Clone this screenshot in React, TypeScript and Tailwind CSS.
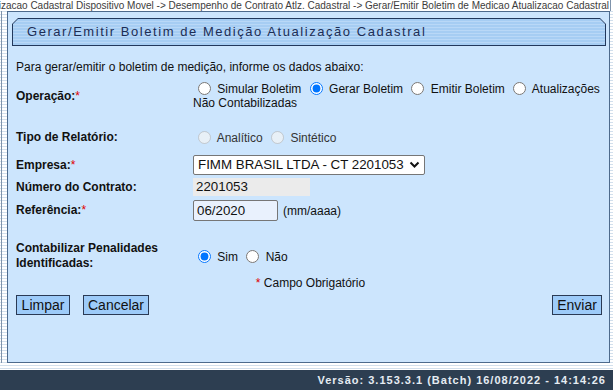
import React from "react";

const stripes =
  "bg-[repeating-linear-gradient(to_bottom,#ffffff_0px,#ffffff_2px,#d2dfec_2px,#d2dfec_3px)]";

function Radio({
  label,
  checked,
  disabled,
  name,
}: {
  label: string;
  checked?: boolean;
  disabled?: boolean;
  name: string;
}) {
  return (
    <label className={disabled ? "text-[#333]" : "text-[#111]"}>
      <input
        type="radio"
        name={name}
        defaultChecked={checked}
        disabled={disabled}
        className="m-0 ml-[5px] mr-[3px] h-[13px] w-[13px] align-[-2px]"
      />{" "}
      {label}
    </label>
  );
}

function Label({ text, required }: { text: string; required?: boolean }) {
  return (
    <div className="font-bold text-[12px] leading-[15px] text-[#111]">
      {text}
      {required && <span className="font-normal text-[#e00000]">*</span>}
    </div>
  );
}

function App() {
  return (
    <div
      className={`flex h-[390px] w-[613px] flex-col overflow-hidden font-['Liberation_Sans',Arial,sans-serif] ${stripes}`}
    >
      <div className="flex h-[11px] justify-end overflow-hidden whitespace-nowrap bg-white pr-[2px] text-[10px] leading-[11px] text-[#3c3c3c]">
        <span className="border-r border-[#7f93ab] pr-[1px]">
          Gsan -&gt; Cadastro -&gt; Atualizacao Cadastral -&gt; Atualizacao Cadastral Dispositivo Movel -&gt; Desempenho de Contrato Atlz. Cadastral -&gt; Gerar/Emitir Boletim de Medicao Atualizacao Cadastral
        </span>
      </div>

      <div className="flex">
        <div className="ml-[1px] w-[6px] border-l border-[#7f93ab]" />
        <div className="flex h-[352px] w-[603px] flex-col border border-[#4d6a8c] bg-[#cce5fd]">
          <div className="ml-[4px] mr-[3px] mt-[6px] h-[28px] bg-[#22385c] p-[1px] [clip-path:polygon(6px_0,calc(100%_-_6px)_0,100%_6px,100%_100%,0_100%,0_6px)]">
            <div className="flex h-full items-center bg-[repeating-linear-gradient(to_bottom,#a6cdf3_0px,#a6cdf3_2px,#b9d8f7_2px,#b9d8f7_3px)] pl-[14px] text-[13px] tracking-[1.55px] text-[#1c2d55] [clip-path:polygon(5px_0,calc(100%_-_5px)_0,100%_5px,100%_100%,0_100%,0_5px)]">
              Gerar/Emitir Boletim de Medição Atualização Cadastral
            </div>
          </div>

          <div className="flex flex-col pl-[8px] pr-[4px] text-[12px] text-[#111]">
            <p className="mt-[14px] h-[14px] leading-[14px]">
              Para gerar/emitir o boletim de medição, informe os dados abaixo:
            </p>

            <div className="mt-[8px] grid grid-cols-[177px_1fr] items-center">
              <Label text="Operação:" required />
              <div className="leading-[14px]">
                <Radio name="op" label="Simular Boletim" />{" "}
                <Radio name="op" label="Gerar Boletim" checked />{" "}
                <Radio name="op" label="Emitir Boletim" />{" "}
                <Radio name="op" label="Atualizações Não Contabilizadas" />
              </div>
            </div>

            <div className="mt-[20px] grid grid-cols-[177px_1fr] items-center">
              <Label text="Tipo de Relatório:" />
              <div className="leading-[14px]">
                <Radio name="tipo" label="Analítico" disabled />{" "}
                <Radio name="tipo" label="Sintético" disabled />
              </div>
            </div>

            <div className="mt-[10px] grid grid-cols-[177px_1fr] items-center">
              <Label text="Empresa:" required />
              <div className="relative h-[20px] w-[232px]">
                <select className="h-full w-full appearance-none rounded-[2px] border border-[#767676] bg-white pl-[4px] text-[13.33px] leading-[18px] text-[#111]">
                  <option>FIMM BRASIL LTDA - CT 2201053</option>
                </select>
                <svg
                  className="pointer-events-none absolute right-[5px] top-[6px]"
                  width="11"
                  height="8"
                  viewBox="0 0 11 8"
                >
                  <path
                    d="M1.5 1.5l4 4 4-4"
                    fill="none"
                    stroke="#111"
                    strokeWidth="2"
                  />
                </svg>
              </div>
            </div>

            <div className="mt-[3px] grid grid-cols-[177px_1fr] items-center">
              <Label text="Número do Contrato:" />
              <div className="h-[18px] w-[117px] bg-[#ebebeb] pl-[3px] text-[13.33px] leading-[18px]">
                2201053
              </div>
            </div>

            <div className="mt-[4px] grid grid-cols-[177px_1fr] items-center">
              <Label text="Referência:" required />
              <div className="flex items-center">
                <input
                  defaultValue="06/2020"
                  className="h-[21px] w-[85px] rounded-[2px] border border-[#767676] bg-[#e9f1fd] pl-[3px] text-[13.33px] text-[#111]"
                />
                <span className="ml-[5px]">(mm/aaaa)</span>
              </div>
            </div>

            <div className="mt-[20px] grid grid-cols-[177px_1fr] items-center">
              <Label text="Contabilizar Penalidades Identificadas:" />
              <div className="pt-[2px] leading-[14px]">
                <Radio name="pen" label="Sim" checked />{" "}
                <Radio name="pen" label="Não" />
              </div>
            </div>

            <p className="mt-[5px] h-[14px] text-center leading-[14px]">
              <span className="text-[#e00000]">*</span> Campo Obrigatório
            </p>

            <div className="mt-[5px] flex items-center justify-between pr-[3px]">
              <div className="flex gap-[13px]">
                <button className="h-[20px] w-[54px] border border-[#2a3a55] bg-[#9dcbf9] text-[14px] leading-[18px] text-[#111]">
                  Limpar
                </button>
                <button className="h-[20px] w-[66px] border border-[#2a3a55] bg-[#9dcbf9] text-[14px] leading-[18px] text-[#111]">
                  Cancelar
                </button>
              </div>
              <button className="h-[20px] w-[50px] border border-[#2a3a55] bg-[#9dcbf9] text-[14px] leading-[18px] text-[#111]">
                Enviar
              </button>
            </div>
          </div>
        </div>
      </div>

      <div className="mt-[7px] flex h-[20px] items-center justify-end bg-[#2d3e51] pr-[7px] text-[11px] font-bold tracking-[1px] text-[#e6ecf3]">
        Versão: 3.153.3.1 (Batch) 16/08/2022 - 14:14:26
      </div>
    </div>
  );
}

export default App;
